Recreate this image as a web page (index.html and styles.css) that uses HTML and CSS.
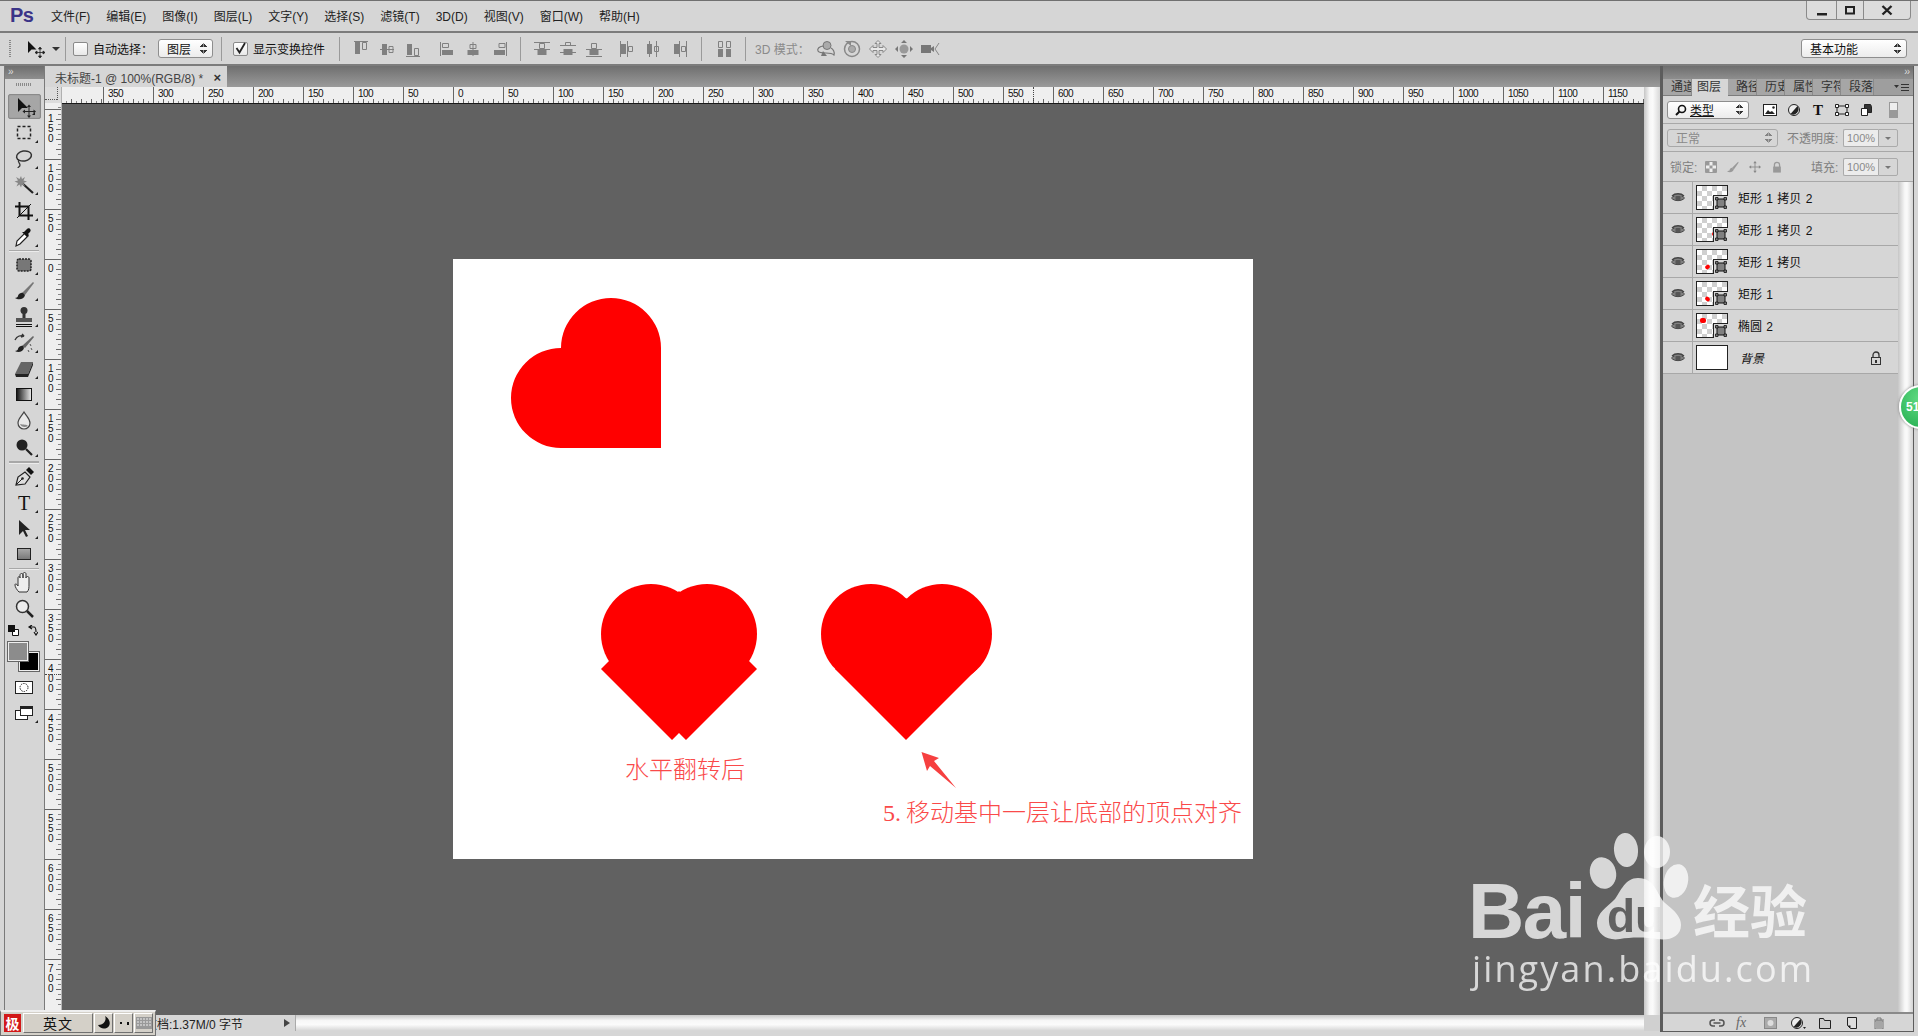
FILE: index.html
```html
<!DOCTYPE html>
<html lang="zh-CN">
<head>
<meta charset="utf-8">
<title>Photoshop</title>
<link rel="stylesheet" href="styles.css">
</head>
<body>
<svg class="defs" aria-hidden="true">
  <symbol id="a1" viewBox="0 0 26 26"><path d="M6 5h14v1H6z"/><path d="M7 6h5v12H7z"/><path class="ol" d="M14.5 6.5h4v7h-4z"/></symbol>
  <symbol id="a2" viewBox="0 0 26 26"><path d="M6 13h14v1H6z"/><path d="M8 8h5v11H8z"/><path class="ol" d="M15 10.5h4v6h-4z"/></symbol>
  <symbol id="a3" viewBox="0 0 26 26"><path d="M6 20h14v1H6z"/><path d="M7 8h5v11H7z"/><path class="ol" d="M14.5 12.5h4v7h-4z"/></symbol>
  <symbol id="a4" viewBox="0 0 26 26"><path d="M6 6h1v14H6z"/><path class="ol" d="M8.5 7.5h6v4h-6z"/><path d="M8 14h11v5H8z"/></symbol>
  <symbol id="a5" viewBox="0 0 26 26"><path d="M12.500 6h1v14h-1z"/><path class="ol" d="M10 8.500h6v4h-6z"/><path d="M7.500 14h11v5h-11z"/></symbol>
  <symbol id="a6" viewBox="0 0 26 26"><path d="M20 6h1v14h-1z"/><path class="ol" d="M13 7.500h6v4h-6z"/><path d="M8 14h11v5H8z"/></symbol>
  <symbol id="a7" viewBox="0 0 26 26"><path d="M5 6h16v1H5zM5 13h16v1H5z"/><path class="ol" d="M10.500 7.500h5v5h-5z"/><path d="M8.500 14h9v5h-9z"/></symbol>
  <symbol id="a8" viewBox="0 0 26 26"><path d="M5 9h16v1H5zM5 16h16v1H5z"/><path class="ol" d="M10.500 6.500h5v3h-5z"/><path d="M8.500 13h9v6h-9z"/></symbol>
  <symbol id="a9" viewBox="0 0 26 26"><path d="M5 13h16v1H5zM5 20h16v1H5z"/><path class="ol" d="M10.500 7.500h5v5h-5z"/><path d="M8.500 14h9v5h-9z"/></symbol>
  <symbol id="a10" viewBox="0 0 26 26"><path d="M6 5h1v16H6zM13 5h1v16h-1z"/><path d="M7 8h5v10H7z"/><path class="ol" d="M14.500 10.500h4v5h-4z"/></symbol>
  <symbol id="a11" viewBox="0 0 26 26"><path d="M9 5h1v16H9zM16 5h1v16h-1z"/><path d="M7 8h5v10H7z"/><path class="ol" d="M14.500 10.500h4v5h-4z"/></symbol>
  <symbol id="a12" viewBox="0 0 26 26"><path d="M13 5h1v16h-1zM20 5h1v16h-1z"/><path d="M8 8h5v10H8z"/><path class="ol" d="M15.500 10.500h4v5h-4z"/></symbol>
  <symbol id="a13" viewBox="0 0 26 26"><path d="M7 13h5v8H7zM15 13h5v8h-5z"/><path class="ol" d="M7.500 5.500h4v6h-4zM15.500 5.500h4v6h-4z"/></symbol>
  <symbol id="sm" viewBox="0 0 14 14"><path d="M3 3h8v8H3z" fill="none" stroke="#111"/><path d="M1.500 1.500h2.500v2.500H1.500zM10 1.500h2.500v2.500H10zM1.500 10h2.500v2.500H1.500zM10 10h2.500v2.500H10z" fill="#fff" stroke="#111" stroke-width=".8"/></symbol>
  <symbol id="eye" viewBox="0 0 14 10"><path d="M.5 5C3 1.500 11 1.500 13.500 5 11 8.500 3 8.500.5 5z" fill="#c8c8c8" stroke="#444"/><circle cx="7" cy="5" r="2.600" fill="#555"/><path d="M1 3c3-3 9-3 12 0" fill="none" stroke="#444" stroke-width="1.300"/></symbol>
</svg>

<div class="app ui">
  <header class="titlebar">
    <span class="ps-logo">Ps</span>
    <nav class="menu">
      <span>文件(F)</span><span>编辑(E)</span><span>图像(I)</span><span>图层(L)</span><span>文字(Y)</span><span>选择(S)</span><span>滤镜(T)</span><span>3D(D)</span><span>视图(V)</span><span>窗口(W)</span><span>帮助(H)</span>
    </nav>
    <div class="winbtns">
      <span class="winbtn"><svg width="12" height="12" viewBox="0 0 12 12"><path d="M1 9h10v2.500H1z" fill="#222"/></svg></span>
      <span class="winbtn"><svg width="12" height="12" viewBox="0 0 12 12"><path d="M2 3h8v6.500H2z" fill="none" stroke="#222" stroke-width="2"/></svg></span>
      <span class="winbtn wide"><svg width="12" height="12" viewBox="0 0 12 12"><path d="M1.500 2l9 8.500M10.500 2l-9 8.500" stroke="#222" stroke-width="2.400" fill="none"/></svg></span>
    </div>
  </header>

  <div class="options">
    <span class="grip"></span>
    <svg class="opt-move" width="18" height="18" viewBox="0 0 18 18"><path d="M1 1v12l3.500-3.500h5z" fill="#111"/><path d="M13 8v9M8.500 12.500h9M13 7l-1.500 2h3zM13 18l-1.500-2h3zM8 12.500l2-1.500v3zM18 12.500l-2-1.500v3z" stroke="#222" stroke-width=".8" fill="#222"/></svg>
    <span class="caret"></span>
    <span class="vsep s1"></span>
    <span class="check c1"></span>
    <span class="opt-label l1">自动选择：</span>
    <span class="select sel-layer">图层<i class="updown"></i></span>
    <span class="vsep s2"></span>
    <span class="check c2"><svg width="13" height="13" viewBox="0 0 13 13"><path d="M2.500 6l3 4.500L11 1" fill="none" stroke="#222" stroke-width="1.800"/></svg></span>
    <span class="opt-label l2">显示变换控件</span>
    <span class="vsep s3"></span>
    <svg class="oi g0"><use href="#a1"/></svg><svg class="oi"><use href="#a2"/></svg><svg class="oi"><use href="#a3"/></svg>
    <svg class="oi g2"><use href="#a4"/></svg><svg class="oi"><use href="#a5"/></svg><svg class="oi"><use href="#a6"/></svg>
    <span class="vsep s2"></span>
    <svg class="oi g2"><use href="#a7"/></svg><svg class="oi"><use href="#a8"/></svg><svg class="oi"><use href="#a9"/></svg>
    <svg class="oi g1"><use href="#a10"/></svg><svg class="oi"><use href="#a11"/></svg><svg class="oi"><use href="#a12"/></svg>
    <span class="vsep s4"></span>
    <svg class="oi g3"><use href="#a13"/></svg>
    <span class="vsep s5"></span>
    <span class="opt-label l3">3D 模式：</span>
    <svg class="oi3 first" viewBox="0 0 20 18"><ellipse cx="11" cy="5.500" rx="4" ry="4" fill="#aaa" stroke="#777"/><path d="M8 6C3 6 1 9 2 11s5 2 8 2 7 1 8 2c1-3-1-6-3-7" fill="none" stroke="#777" stroke-width="1.200"/><path d="M7 11l4 5-6 0z" fill="#777"/></svg>
    <svg class="oi3" viewBox="0 0 20 18"><circle cx="10" cy="9" r="7.500" fill="none" stroke="#888" stroke-width="1.500"/><circle cx="10" cy="9" r="3.500" fill="#aaa" stroke="#888"/><path d="M3 1h6v5z" fill="#888"/></svg>
    <svg class="oi3" viewBox="0 0 20 18"><path d="M10 .5l3 3h-2v4h4V5.500l3.500 3.500-3.500 3.500v-2h-4v4h2l-3 3-3-3h2v-4H5v2L1.500 9 5 5.500v2h4v-4H7z" fill="#e8e8e8" stroke="#888"/></svg>
    <svg class="oi3" viewBox="0 0 20 18"><circle cx="10" cy="9" r="4.500" fill="#999"/><path d="M10 0l3 3H7zM10 18l-3-3h6zM1 9l3-3v6zM19 9l-3 3V6z" fill="#777"/></svg>
    <svg class="oi3" viewBox="0 0 20 18"><path d="M1 5h10v8H1zM11 8l3-2v6l-3-2z" fill="#777"/><path d="M19 3l-4 6 4 6" fill="none" stroke="#888"/></svg>
    <span class="select sel-work">基本功能<i class="updown"></i></span>
  </div>

  <main class="main">
    <aside class="tools">
      <div class="tools-head">››</div>
      <div class="tools-grip"></div>
      <div class="tool active"><svg viewBox="0 0 22 22"><path d="M4 2v14l4-4h6z" fill="#111"/><path d="M15 10v11M10 15.500h11" stroke="#222"/><path d="M15 8.500l-2 2.500h4zM15 22l-2-2.500h4zM8.500 15.500l2.500-2v4zM22 15.500l-2.500-2v4z" fill="#222"/></svg></div>
      <div class="tool mk"><svg viewBox="0 0 22 22"><path d="M4.500 4.500h13v12h-13z" fill="none" stroke="#222" stroke-width="1.500" stroke-dasharray="3 2"/></svg></div>
      <div class="tool mk"><svg viewBox="0 0 22 22"><ellipse cx="11" cy="8" rx="7.500" ry="5" fill="none" stroke="#333" stroke-width="1.500" transform="rotate(-10 11 8)"/><path d="M6 12c-2 2 1 3 1 5s-2 2-2 3" fill="none" stroke="#333" stroke-width="1.300"/></svg></div>
      <div class="tool mk"><svg viewBox="0 0 22 22"><path d="M9 9l11 10" stroke="#222" stroke-width="2.200"/><path d="M8 2l1 3 3-2-1.500 3.500 3.500 1-3.500 1.500 1.500 3.500-3-2-1 3-1.500-3-3 2 1.500-3.500-3.500-1.500 3.500-1L3 3l3.500 2z" fill="#888"/></svg></div>
      <div class="tool mk"><svg viewBox="0 0 22 22"><path d="M6.500 2v13.500H20M2 6.500h13.500V20" fill="none" stroke="#111" stroke-width="2"/><path d="M4 18L18 4" stroke="#111" stroke-width="1"/></svg></div>
      <div class="tool mk"><svg viewBox="0 0 22 22"><path d="M3 20l1-5 8-8 3 3-8 8z" fill="#fff" stroke="#222" stroke-width="1.200"/><path d="M11 6l3-3c2-2 5 1 3 3l-2 2 1 1-2 2-5-5 2 0z" fill="#111"/></svg></div>
      <div class="tool-sep"></div>
      <div class="tool mk"><svg viewBox="0 0 22 22"><rect x="4" y="5" width="14" height="12" rx="2" fill="#777" stroke="#222" stroke-dasharray="2 1" stroke-width="1.500"/></svg></div>
      <div class="tool mk"><svg viewBox="0 0 22 22"><path d="M9 13L20 2l1 1-9 12z" fill="#777"/><path d="M10 13c-3-1-5 2-5 3s-2 2-3 2c3 2 9 2 10-3z" fill="#222"/></svg></div>
      <div class="tool mk"><svg viewBox="0 0 22 22"><circle cx="11" cy="4.500" r="3.500" fill="#333"/><path d="M9.500 7h3v5h-3z" fill="#333"/><path d="M3 12h16v4H3z" fill="#555"/><path d="M3 18.500h16M3 20.500h16" stroke="#111"/></svg></div>
      <div class="tool mk"><svg viewBox="0 0 22 22"><path d="M9 14L20 4l1 1-9 11z" fill="#666"/><path d="M10 14c-3-1-5 2-5 3s-2 2-3 2c3 2 8 1 9-3z" fill="#222"/><path d="M2 8c2-4 6-5 9-4l-2-2m2 2l-3 1" fill="none" stroke="#333" stroke-width="1.400"/><path d="M17 12l1 2M18 16l1 2M15 18l1 2" stroke="#555"/></svg></div>
      <div class="tool mk"><svg viewBox="0 0 22 22"><path d="M8 4h12L15 16H2z" fill="#666"/><path d="M2 16h13v3H3z" fill="#222"/><path d="M15 16l5-12v3l-5 12z" fill="#222"/></svg></div>
      <div class="tool mk"><svg viewBox="0 0 22 22"><defs><linearGradient id="gr"><stop offset="0" stop-color="#111"/><stop offset="1" stop-color="#eee"/></linearGradient></defs><rect x="3.500" y="4.500" width="15" height="12" fill="url(#gr)" stroke="#111"/></svg></div>
      <div class="tool mk"><svg viewBox="0 0 22 22"><path d="M11 2c3 5 6 7 6 11a6 6 0 0 1-12 0c0-4 3-6 6-11z" fill="#e8e8e8" stroke="#444" stroke-width="1.200"/><path d="M7 14c1 3 5 4 8 2-1-2-5-1-8-2z" fill="#888"/></svg></div>
      <div class="tool mk"><svg viewBox="0 0 22 22"><circle cx="9" cy="9" r="5.500" fill="#222"/><path d="M13 13l6 6" stroke="#222" stroke-width="2.200"/></svg></div>
      <div class="tool-sep tall"></div>
      <div class="tool mk"><svg viewBox="0 0 22 22"><path d="M3 19l2-8 7-5 5 5-5 7z" fill="#ddd" stroke="#222" stroke-width="1.200"/><path d="M3 19l6-6" stroke="#222"/><circle cx="9.500" cy="12.500" r="1.300" fill="#222"/><path d="M13 4l3-3 5 5-3 3z" fill="#111"/></svg></div>
      <div class="tool mk"><span class="type-t">T</span></div>
      <div class="tool mk"><svg viewBox="0 0 22 22"><path d="M6 2v15l4-4 3 6 2-1-3-6h5z" fill="#222"/></svg></div>
      <div class="tool mk"><svg viewBox="0 0 22 22"><defs><linearGradient id="gs" x1="0" y1="0" x2="0" y2="1"><stop offset="0" stop-color="#aaa"/><stop offset="1" stop-color="#777"/></linearGradient></defs><rect x="4.500" y="4.500" width="13" height="11" fill="url(#gs)" stroke="#222"/></svg></div>
      <div class="tool-sep"></div>
      <div class="tool mk"><svg viewBox="0 0 22 22"><path d="M6 20c-2-2-4-5-4-7s2-1 3 1V6c0-2 2-2 2 0V3c0-2 3-2 3 0v3-4c0-2 3-2 3 0v4c0-2 3-2 3 0v6c0 4 0 6-2 8z" fill="#eee" stroke="#333"/></svg></div>
      <div class="tool"><svg viewBox="0 0 22 22"><circle cx="9.500" cy="8.500" r="6" fill="#eee" stroke="#333" stroke-width="1.500"/><path d="M14 13l6 6" stroke="#222" stroke-width="2.500"/></svg></div>
      <div class="color-mini">
        <svg width="11" height="11" viewBox="0 0 11 11"><path d="M4.500 4.500h6v6h-6z" fill="#fff" stroke="#111"/><path d="M0 0h7v7H0z" fill="#111"/></svg>
        <svg width="11" height="11" viewBox="0 0 11 11"><path d="M2 2h5c2 0 2 2 2 5M5 0L2 2l3 2M7 7l2 3 2-3" fill="none" stroke="#111" stroke-width="1.200"/></svg>
      </div>
      <div class="swatches"><span class="sw-bg"></span><span class="sw-fg"></span></div>
      <div class="tool"><svg viewBox="0 0 22 22"><rect x="2.500" y="5.500" width="17" height="12" fill="#fff" stroke="#222"/><circle cx="11" cy="11.500" r="4" fill="none" stroke="#222" stroke-dasharray="1.500 1"/></svg></div>
      <div class="tool mk"><svg viewBox="0 0 22 22"><rect x="2.500" y="8.500" width="12" height="9" fill="#fff" stroke="#222"/><rect x="7.500" y="4.500" width="12" height="9" fill="#fff" stroke="#222"/><path d="M7.500 4.500h12V7h-12z" fill="#222"/></svg></div>
    </aside>

    <section class="work">
      <div class="tabbar">
        <div class="tab"><span>未标题-1 @ 100%(RGB/8) *</span><b>×</b></div>
      </div>
      <div class="view">
        <div class="view-main">
          <div class="ruler-row">
            <div class="corner"></div>
            <div class="hruler">
              <span class="rh lead"></span>
              <span class="rh">350</span><span class="rh">300</span><span class="rh">250</span><span class="rh">200</span><span class="rh">150</span><span class="rh">100</span><span class="rh">50</span><span class="rh">0</span><span class="rh">50</span><span class="rh">100</span><span class="rh">150</span><span class="rh">200</span><span class="rh">250</span><span class="rh">300</span><span class="rh">350</span><span class="rh">400</span><span class="rh">450</span><span class="rh">500</span><span class="rh">550</span><span class="rh">600</span><span class="rh">650</span><span class="rh">700</span><span class="rh">750</span><span class="rh">800</span><span class="rh">850</span><span class="rh">900</span><span class="rh">950</span><span class="rh">1000</span><span class="rh">1050</span><span class="rh">1100</span><span class="rh">1150</span>
              <i class="cursor-x"></i>
            </div>
          </div>
          <div class="doc-row">
            <div class="vruler">
              <span class="rv lead"></span>
              <span class="rv">150</span><span class="rv">100</span><span class="rv">50</span><span class="rv">0</span><span class="rv">50</span><span class="rv">100</span><span class="rv">150</span><span class="rv">200</span><span class="rv">250</span><span class="rv">300</span><span class="rv">350</span><span class="rv">400</span><span class="rv">450</span><span class="rv">500</span><span class="rv">550</span><span class="rv">600</span><span class="rv">650</span><span class="rv">700</span>
              <i class="cursor-y"></i>
            </div>
            <div class="doc">
              <svg class="canvas" width="800" height="600" viewBox="0 0 800 600">
                <rect width="800" height="600" fill="#fff"/>
                <g fill="#ff0000">
                  <path d="M208 189H108A50 50 0 0 1 108 89A50 50 0 0 1 208 89Z"/>
                  <circle cx="198" cy="375" r="50"/><circle cx="254" cy="375" r="50"/>
                  <path d="M148 410L219 481L226 474L233 481L304 410L226 332Z"/>
                  <circle cx="418" cy="375" r="50"/><circle cx="489" cy="375" r="50"/>
                  <path d="M453 481L382 410L453 339L524 410Z"/>
                </g>
                <path d="M468.500 493L486 499L481 502L503 529L477 507L474 512Z" fill="#f64040"/>
                <text class="note" x="172" y="519">水平翻转后</text>
                <text class="note" x="430" y="562">5.<tspan dx="5">移动基中一层让底部的顶点对齐</tspan></text>
              </svg>
            </div>
          </div>
        </div>
        <div class="vscroll"></div>
      </div>
      <div class="statusbar">
        <div class="status-info"><span>文档:1.37M/0 字节</span><i class="tri"></i></div>
        <div class="hscroll"></div>
        <div class="scroll-corner"></div>
      </div>
    </section>

    <aside class="panels">
      <div class="panel-head">››</div>
      <div class="panel-tabs">
        <span class="ptab t-a">通道</span><span class="ptab active t-b">图层</span><span class="ptab t-a">路径</span><span class="ptab t-c">历史</span><span class="ptab t-c">属性</span><span class="ptab t-c">字符</span><span class="ptab t-d">段落</span>
        <svg class="panel-menu" width="15" height="9" viewBox="0 0 15 9"><path d="M0 2h5L2.500 5zM7 1h8v1H7zM7 4h8v1H7zM7 7h8v1H7z" fill="#333"/></svg>
      </div>
      <div class="prow filter">
        <span class="select sel-filter"><svg width="12" height="12" viewBox="0 0 12 12"><circle cx="7" cy="5" r="3.500" fill="none" stroke="#111" stroke-width="1.600"/><path d="M4.500 7.500L1 11" stroke="#111" stroke-width="2"/></svg><u>类型</u><i class="updown"></i></span>
        <svg class="fi first" viewBox="0 0 14 12"><rect x=".5" y=".5" width="13" height="11" fill="#fff" stroke="#222"/><path d="M2 10l3-4 2 2 2-1 3 3z" fill="#222"/><circle cx="10.500" cy="3.500" r="1.200" fill="#222"/></svg>
        <svg class="fi" viewBox="0 0 14 12"><circle cx="7" cy="6" r="5.500" fill="#eee" stroke="#222"/><path d="M10.500 2a5.500 5.500 0 0 1-7 8z" fill="#222"/></svg>
        <span class="fi-t">T</span>
        <svg class="fi" viewBox="0 0 14 12"><path d="M2 2h10v8H2z" fill="none" stroke="#222"/><path d="M.5.500h3v3h-3zM10.500.500h3v3h-3zM.5 8.500h3v3h-3zM10.500 8.500h3v3h-3z" fill="#fff" stroke="#222"/></svg>
        <svg class="fi" viewBox="0 0 14 12"><path d="M2.500 4.500h6v7h-6z" fill="#fff" stroke="#222"/><path d="M5.500.5h6l1 2v6h-4v-4h-3z" fill="#333" stroke="#222"/></svg>
        <span class="toggle"></span>
      </div>
      <div class="prow blend">
        <span class="select sel-blend dim">正常<i class="updown"></i></span>
        <span class="dim-label op">不透明度:</span>
        <span class="pct">100%</span><span class="pct-drop"></span>
      </div>
      <div class="prow lock">
        <span class="dim-label lk">锁定:</span>
        <svg class="li first" viewBox="0 0 12 12"><path d="M.5.500h11v11H.500z" fill="#eee" stroke="#999"/><path d="M1 1h3.500v3.500H1zM7.500 1H11v3.500H7.500zM4.500 4.500h3v3h-3zM1 7.500h3.500V11H1zM7.500 7.500H11V11H7.500z" fill="#999"/></svg>
        <svg class="li" viewBox="0 0 14 14"><path d="M6 8L13 1l.5 1L8 10z" fill="#999"/><path d="M6 8c-2 0-3 2-3 3l-3 1c3 2 7 1 8-2z" fill="#999"/></svg>
        <svg class="li" viewBox="0 0 14 14"><path d="M7 1v12M1 7h12" stroke="#888"/><path d="M7 0L5 2.500h4zM7 14l-2-2.500h4zM0 7l2.500-2v4zM14 7l-2.500-2v4z" fill="#888"/></svg>
        <svg class="li" viewBox="0 0 14 14"><path d="M4 7V4.500a3 3 0 0 1 6 0V7" fill="none" stroke="#999" stroke-width="1.500"/><rect x="2.500" y="6.500" width="9" height="7" fill="#999"/></svg>
        <span class="dim-label fl">填充:</span>
        <span class="pct">100%</span><span class="pct-drop"></span>
      </div>
      <div class="layers-wrap">
        <div class="layers">
          <div class="layer"><span class="eye"><svg width="14" height="10"><use href="#eye"/></svg></span><span class="thumb"><i class="dot d1"></i><span class="badge"><svg width="14" height="14"><use href="#sm"/></svg></span></span><span class="lname">矩形 1 拷贝 2</span></div>
          <div class="layer"><span class="eye"><svg width="14" height="10"><use href="#eye"/></svg></span><span class="thumb"><i class="dot d2"></i><span class="badge"><svg width="14" height="14"><use href="#sm"/></svg></span></span><span class="lname">矩形 1 拷贝 2</span></div>
          <div class="layer"><span class="eye"><svg width="14" height="10"><use href="#eye"/></svg></span><span class="thumb"><i class="dot d3"></i><span class="badge"><svg width="14" height="14"><use href="#sm"/></svg></span></span><span class="lname">矩形 1 拷贝</span></div>
          <div class="layer"><span class="eye"><svg width="14" height="10"><use href="#eye"/></svg></span><span class="thumb"><i class="dot d4"></i><span class="badge"><svg width="14" height="14"><use href="#sm"/></svg></span></span><span class="lname">矩形 1</span></div>
          <div class="layer"><span class="eye"><svg width="14" height="10"><use href="#eye"/></svg></span><span class="thumb"><i class="dot d5"></i><span class="badge"><svg width="14" height="14"><use href="#sm"/></svg></span></span><span class="lname">椭圆 2</span></div>
          <div class="layer bg"><span class="eye"><svg width="14" height="10"><use href="#eye"/></svg></span><span class="thumb white"></span><span class="lname it">背景</span><svg class="bg-lock" width="12" height="14" viewBox="0 0 12 14"><path d="M3 7V4a3 3 0 0 1 6 0v3" fill="none" stroke="#333" stroke-width="1.300"/><rect x="1.500" y="6.500" width="9" height="7" fill="#d6d6d6" stroke="#333"/><rect x="5" y="9" width="2" height="3" fill="#333"/></svg></div>
        </div>
        <div class="pscroll"></div>
      </div>
      <div class="pfoot">
        <svg class="pf first" viewBox="0 0 16 12"><path d="M6 3H4a3 3 0 0 0 0 6h2M10 3h2a3 3 0 0 1 0 6h-2M4.500 6h7" fill="none" stroke="#555" stroke-width="1.500"/></svg>
        <span class="pf-fx">fx</span>
        <svg class="pf" viewBox="0 0 16 12"><rect x="1.500" y=".5" width="12" height="11" fill="#aaa" stroke="#888"/><circle cx="7.500" cy="6" r="3" fill="#ddd"/></svg>
        <svg class="pf" viewBox="0 0 16 12"><circle cx="7" cy="6" r="5.500" fill="#eee" stroke="#222"/><path d="M10.500 2a5.500 5.500 0 0 1-7 8z" fill="#222"/><path d="M13 10h3l-1.500 2z" fill="#222"/></svg>
        <svg class="pf" viewBox="0 0 16 12"><path d="M2.500 1.500h4l1 2h6v8h-11z" fill="#ccc" stroke="#222"/></svg>
        <svg class="pf" viewBox="0 0 16 12"><path d="M3.500.5h9v11h-6l-3-3z" fill="#ddd" stroke="#222"/><path d="M3.500 8.500h3v3z" fill="#222"/></svg>
        <svg class="pf" viewBox="0 0 16 12"><path d="M3 3h10M6 3V1h4v2" fill="none" stroke="#777"/><path d="M4 4h8v8H4z" fill="none" stroke="#777"/><path d="M6 5v6M8 5v6M10 5v6" stroke="#777"/></svg>
      </div>
    </aside>
    <div class="edge-right"></div>
  </main>
</div>

<div class="float-badge"><span>51</span></div>

<div class="ime">
  <span class="ime-cell ime-logo"><b>极</b></span>
  <span class="ime-cell ime-lang">英文</span>
  <span class="ime-cell ime-sm"><svg width="14" height="14" viewBox="0 0 14 14"><path d="M8 0c2 4-1 9-7 9 2 4 8 5 11 1 2-3 0-8-4-10z" fill="#111"/></svg></span>
  <span class="ime-cell ime-sm"><svg width="14" height="14" viewBox="0 0 14 14"><path d="M3 6h2v2H3zM10 6h2v3h-2z" fill="#111"/></svg></span>
  <span class="ime-cell ime-sm"><svg width="16" height="12" viewBox="0 0 16 12"><rect width="16" height="12" fill="#999"/><path d="M1 2h14M1 5h14M1 8h14" stroke="#eee" stroke-dasharray="2 1"/></svg></span>
</div>

<svg class="watermark" width="360" height="175" viewBox="0 0 360 175">
  <defs>
    <mask id="du-cut"><rect width="360" height="175" fill="#fff"/><text class="wm-du" x="142" y="107" fill="#000">du</text></mask>
  </defs>
  <g fill="#fff">
    <text class="wm-bai" x="3" y="113">Bai</text>
    <g mask="url(#du-cut)">
      <path d="M173 53C190 53 192 70 200 78C210 86 216 92 216 100C216 112 204 116 192 114C182 112 165 112 155 114C143 116 132 110 132 98C132 88 142 82 150 74C156 66 160 53 173 53Z"/>
    </g>
    <ellipse cx="161" cy="25" rx="12" ry="17" transform="rotate(-5 161 25)"/>
    <ellipse cx="192" cy="27" rx="13" ry="16"/>
    <ellipse cx="138" cy="48" rx="13" ry="16" transform="rotate(-15 138 48)"/>
    <ellipse cx="211" cy="56" rx="12" ry="17" transform="rotate(12 211 56)"/>
    <text class="wm-cn" x="228" y="108">经验</text>
    <text class="wm-url" x="7" y="157" textLength="340">jingyan.baidu.com</text>
  </g>
</svg>
</body>
</html>
```

FILE: styles.css
```css
* { box-sizing: border-box; }
html, body { margin: 0; width: 1918px; height: 1036px; overflow: hidden; background: #d6d6d6; }
body { position: relative; }
.defs { position: absolute; width: 0; height: 0; }
.defs path { fill: #808080; }
.defs .ol { fill: none; stroke: #808080; }
.ui { font-family: "Liberation Sans", "Noto Sans CJK SC", sans-serif; font-size: 12px; color: #111; }
.app { display: flex; flex-direction: column; width: 1918px; height: 1036px; }

/* title */
.titlebar { height: 33px; flex: none; display: flex; align-items: flex-start; background: #d6d6d6; border-top: 1px solid #707070; border-bottom: 2px solid #7c7c7c; position: relative; }
.ps-logo { font: bold 20px/22px "Liberation Sans", sans-serif; letter-spacing: -.5px; color: #3b3488; margin: 3px 0 0 10px; width: 41px; }
.menu { display: flex; margin-top: 7px; }
.menu span { margin-right: 16px; line-height: 18px; white-space: nowrap; color: #222; }
.winbtns { margin-left: auto; margin-right: 7px; display: flex; height: 19px; border: 1px solid #8a8a8a; border-top: 0; border-radius: 0 0 4px 4px; background: #dcdcdc; }
.winbtn { width: 27px; display: flex; align-items: center; justify-content: center; border-left: 1px solid #8a8a8a; }
.winbtn:first-child { border-left: 0; width: 29px; }
.winbtn.wide { width: 47px; }

/* options */
.options { height: 33px; flex: none; display: flex; align-items: center; padding-left: 9px; background: #d6d6d6; border-bottom: 2px solid #7c7c7c; }
.grip { width: 2px; height: 18px; background: repeating-linear-gradient(#888 0 1px, transparent 1px 2px); }
.opt-move { margin-left: 16px; flex: none; }
.caret { margin-left: 7px; border: 4px solid transparent; border-top: 4px solid #333; border-bottom: 0; }
.vsep { width: 1px; height: 24px; background: #9a9a9a; flex: none; }
.s1 { margin-left: 5px; } .s2 { margin-left: 8px; } .s3 { margin-left: 14px; } .s4 { margin-left: 9px; } .s5 { margin-left: 8px; }
.check { width: 15px; height: 14px; flex: none; background: linear-gradient(#fff, #e8e8e8); border: 1px solid #8a8a8a; border-radius: 2px; display: flex; align-items: center; justify-content: center; }
.c1 { margin-left: 7px; } .c2 { margin-left: 11px; }
.opt-label { flex: none; white-space: nowrap; }
.l1 { margin-left: 5px; width: 60px; }
.l2 { margin-left: 5px; width: 72px; }
.l3 { margin-left: 9px; width: 61px; color: #8a8a8a; }
.select { position: relative; display: inline-flex; align-items: center; height: 19px; background: linear-gradient(#fff, #ececec); border: 1px solid #8e8e8e; border-radius: 3px; flex: none; }
.updown { position: absolute; right: 5px; top: 50%; width: 7px; height: 11px; margin-top: -5.5px; background:
  linear-gradient(135deg, transparent 50%, #333 50%) 0 0 / 3.5px 4px no-repeat,
  linear-gradient(225deg, transparent 50%, #333 50%) 100% 0 / 3.5px 4px no-repeat,
  linear-gradient(45deg, transparent 50%, #333 50%) 0 100% / 3.5px 4px no-repeat,
  linear-gradient(315deg, transparent 50%, #333 50%) 100% 100% / 3.5px 4px no-repeat; }
.sel-layer { width: 55px; margin-left: 5px; padding-left: 8px; }
.sel-work { width: 106px; padding-left: 8px; margin-left: auto; margin-right: 11px; }
.oi { width: 26px; height: 26px; flex: none; }
.g0 { margin-left: 8px; } .g1 { margin-left: 7px; } .g2 { margin-left: 8px; } .g3 { margin-left: 9px; }
.oi3 { width: 20px; height: 18px; margin: 0 3px; flex: none; }
.oi3.first { margin-left: 0; }

/* main */
.main { flex: 1; display: flex; min-height: 0; }
.tools { width: 41px; margin-left: 4px; flex: none; background: #d6d6d6; border-left: 1px solid #7a7a7a; border-right: 1px solid #7a7a7a; padding-right: 1px; display: flex; flex-direction: column; align-items: stretch; height: 966px; }
.tools-head { height: 13px; margin-right: -1px; background: linear-gradient(#6e6e6e, #8e8e8e); color: #ddd; font-size: 10px; line-height: 12px; padding-left: 3px; letter-spacing: -1px; }
.tools-grip { height: 15px; background: repeating-linear-gradient(90deg, #8a8a8a 0 1px, transparent 1px 2px) center 4px / 16px 3px no-repeat; }
.tool { height: 26px; flex: none; display: flex; align-items: center; justify-content: center; position: relative; }
.tool svg { width: 22px; height: 22px; }
.tool.active { margin: 0 2px 1px 3px; background: #a6a6a6; border: 1px solid #8a8a8a; border-radius: 2px; height: 25px; box-shadow: inset 0 0 1px #777; }
.tool.active::after, .tool.mk::after { content: ""; position: absolute; right: 5px; bottom: 3px; border-left: 3px solid transparent; border-bottom: 3px solid #222; }
.tool-sep { height: 2px; margin: 0 4px; background: #a8a8a8; border-bottom: 1px solid #ececec; flex: none; }
.tool-sep.tall { height: 4px; margin-bottom: 0; border-top: 1px solid #d6d6d6; }
.type-t { font: 20px/22px "Liberation Serif", serif; color: #111; }
.color-mini { height: 16px; display: flex; justify-content: space-between; padding: 3px 5px 0 3px; flex: none; }
.swatches { height: 34px; position: relative; flex: none; margin-top: 2px; }
.sw-fg, .sw-bg { position: absolute; display: block; width: 20px; height: 19px; border: 1px solid #eee; box-shadow: 0 0 0 1px #666; }
.sw-fg { left: 3px; top: 2px; background: #8c8c8c; }
.sw-bg { left: 14px; top: 12px; background: #000; }

.work { width: 1615px; flex: none; display: flex; flex-direction: column; height: 965px; }
.tabbar { height: 21px; flex: none; background: linear-gradient(#6f6f6f, #9a9a9a); }
.tab { width: 182px; height: 21px; padding: 1px 6px 0 10px; display: flex; align-items: center; justify-content: space-between; background: #d6d6d6; color: #444; font-size: 12px; white-space: nowrap; }
.tab b { font: bold 13px/1 "Liberation Sans", sans-serif; color: #333; }
.view { height: 928px; display: flex; flex: none; }
.view-main { flex: 1; display: flex; flex-direction: column; min-width: 0; }
.ruler-row { height: 16px; display: flex; flex: none; }
.corner { width: 17px; background: #dcdcdc; border-right: 1px solid #b0b0b0; position: relative; flex: none; }
.corner::before { content: ""; position: absolute; left: 0; bottom: 3px; width: 12px; border-top: 1px dotted #555; }
.corner::after { content: ""; position: absolute; left: 12px; top: 0; height: 13px; border-left: 1px dotted #555; }
.hruler { flex: 1; display: flex; overflow: hidden; position: relative; background: #efefef; min-width: 0; }
.rh { flex: none; width: 50px; height: 16px; border-left: 1px solid #666; padding-left: 4px; font: 10px/13px "Liberation Sans", sans-serif; letter-spacing: -.6px; color: #111; background:
  repeating-linear-gradient(90deg, transparent 0 9px, #666 9px 10px) 0 100% / 100% 4px no-repeat,
  repeating-linear-gradient(90deg, transparent 0 4px, #888 4px 5px) 0 100% / 100% 2px no-repeat; }
.rh.lead { width: 41px; border-left: 0; }
.cursor-x { position: absolute; left: 971px; top: 0; height: 16px; border-left: 1px dotted #444; }
.doc-row { flex: 1; display: flex; min-height: 0; }
.vruler { width: 17px; flex: none; background: #efefef; border-right: 1px solid #b8b8b8; display: flex; flex-direction: column; overflow: hidden; position: relative; }
.rv { display: block; flex: none; height: 50px; width: 16px; border-top: 1px solid #666; padding: 4px 8px 0 3px; font: 10px/10px "Liberation Sans", sans-serif; word-break: break-all; color: #111; background:
  repeating-linear-gradient(transparent 0 9px, #666 9px 10px) 100% 0 / 5px 100% no-repeat,
  repeating-linear-gradient(transparent 0 4px, #888 4px 5px) 100% 0 / 3px 100% no-repeat; }
.rv.lead { height: 6px; border-top: 0; padding: 0; }
.cursor-y { position: absolute; left: 0; top: 571px; width: 16px; border-top: 1px dotted #444; }
.doc { flex: 1; background: #616161; border-top: 1px solid #1a1a1a; padding: 155px 0 0 391px; min-width: 0; overflow: hidden; }
.canvas { display: block; }
.note { font: 24px "Liberation Serif", "Noto Sans CJK SC", serif; fill: #fa4a4a; font-weight: 300; }
.vscroll { width: 16px; flex: none; background: linear-gradient(90deg, #c6c6c6, #f7f7f7 35%, #fbfbfb 55%, #d8d8d8); }

.statusbar { height: 16px; display: flex; flex: none; }
.status-info { width: 251px; flex: none; padding-left: 100px; padding-right: 5px; background: #d6d6d6; border-right: 1px solid #aaa; display: flex; align-items: center; justify-content: space-between; font-size: 12px; color: #222; white-space: nowrap; }
.tri { border-left: 6px solid #444; border-top: 4.500px solid transparent; border-bottom: 4.500px solid transparent; }
.hscroll { flex: 1; background: linear-gradient(#c8c8c8, #f7f7f7 35%, #fbfbfb 60%, #d4d4d4); }
.scroll-corner { width: 16px; background: #d0d0d0; flex: none; }

/* right panels */
.panels { width: 254px; flex: none; border-left: 3px solid #5c5c5c; border-right: 1px solid #5c5c5c; border-bottom: 1px solid #5c5c5c; display: flex; flex-direction: column; height: 966px; background: #d6d6d6; }
.panel-head { height: 13px; flex: none; background: linear-gradient(#6e6e6e, #8e8e8e); color: #ddd; font-size: 10px; line-height: 12px; text-align: right; padding-right: 4px; letter-spacing: -1px; }
.panel-tabs { height: 17px; flex: none; display: flex; background: #9e9e9e; position: relative; border-bottom: 1px solid #7c7c7c; }
.ptab { display: block; overflow: hidden; white-space: nowrap; height: 16px; line-height: 16px; padding-left: 8px; color: #333; border-right: 1px solid #8a8a8a; background: #a6a6a6; font-size: 12px; }
.t-a { width: 29px; } .t-c { width: 28px; } .t-d { width: 33px; } .t-b { width: 36px; }
.ptab.active { background: #d6d6d6; height: 17px; position: relative; z-index: 1; border-right: 0; padding-left: 5px; }
.panel-menu { position: absolute; right: 4px; top: 4px; }
.prow { flex: none; display: flex; align-items: center; padding-left: 4px; border-bottom: 1px solid #a8a8a8; }
.filter { height: 28px; }
.blend { height: 28px; }
.lock { height: 30px; }
.sel-filter { width: 82px; height: 18px; padding-left: 7px; gap: 3px; }
.sel-filter u { color: #111; }
.fi { width: 14px; height: 12px; margin-left: 10px; flex: none; }
.fi.first { margin-left: 14px; }
.fi-t { width: 14px; margin-left: 10px; font: bold 15px/12px "Liberation Serif", serif; text-align: center; color: #111; }
.toggle { width: 9px; height: 16px; margin-left: 16px; background: linear-gradient(#eee 50%, #999 50%); border: 1px solid #999; }
.sel-blend { width: 111px; height: 18px; padding-left: 8px; background: #d6d6d6; border-color: #a8a8a8; color: #8a8a8a; }
.dim .updown { opacity: .5; }
.dim-label { color: #808080; white-space: nowrap; flex: none; }
.op { margin-left: 9px; width: 56px; }
.lk { margin-left: 3px; width: 34px; }
.fl { margin-left: 28px; width: 32px; }
.pct { width: 35px; height: 18px; line-height: 17px; background: #ececec; border: 1px solid #aaa; border-right: 0; border-radius: 2px 0 0 2px; color: #8a8a8a; font-size: 11px; padding-left: 3px; flex: none; }
.pct-drop { width: 20px; height: 18px; border: 1px solid #aaa; border-radius: 0 2px 2px 0; flex: none; position: relative; background: #d6d6d6; }
.pct-drop::after { content: ""; position: absolute; left: 6px; top: 7px; border: 3px solid transparent; border-top: 3px solid #777; border-bottom: 0; }
.li { width: 12px; height: 12px; margin-left: 10px; flex: none; }
.li.first { margin-left: 1px; }
.layers-wrap { flex: 1; display: flex; min-height: 0; background: #c4c4c4; }
.layers { flex: 1; display: flex; flex-direction: column; }
.layer { height: 32px; flex: none; display: flex; align-items: center; background: #d6d6d6; border-bottom: 1px solid #a8a8a8; position: relative; }
.eye { width: 30px; height: 31px; flex: none; display: flex; align-items: center; justify-content: center; border-right: 1px solid #a8a8a8; }
.thumb { width: 32px; height: 25px; margin-left: 3px; flex: none; position: relative; border: 1px solid #222; background: repeating-conic-gradient(#cfcfcf 0 25%, #fff 0 50%) 0 0 / 10px 10px; }
.thumb.white { background: #fff; }
.dot { position: absolute; width: 5px; height: 4px; background: #f00; border-radius: 2px; display: block; }
.d1 { left: 16px; top: 15px; } .d2 { left: 15px; top: 14px; } .d3 { left: 8px; top: 15px; transform: rotate(-40deg); } .d4 { left: 8px; top: 15px; transform: rotate(35deg); } .d5 { left: 3px; top: 4px; width: 6px; height: 5px; }
.badge { position: absolute; right: -1px; bottom: -1px; width: 15px; height: 15px; background: #d6d6d6; border-left: 1px solid #222; border-top: 1px solid #222; display: block; }
.badge svg { display: block; }
.lname { margin-left: 10px; word-spacing: 1px; white-space: nowrap; color: #111; }
.lname.it { font-style: italic; margin-left: 12px; }
.bg-lock { position: absolute; right: 16px; top: 9px; }
.pscroll { width: 15px; flex: none; background: linear-gradient(90deg, #c6c6c6, #f7f7f7 45%, #fafafa 60%, #d4d4d4); }
.pfoot { height: 19px; flex: none; display: flex; align-items: center; border-top: 2px solid #8a8a8a; background: #d6d6d6; }
.pf { width: 16px; height: 12px; margin-left: 11px; flex: none; }
.pf.first { margin-left: 46px; }
.pf-fx { font: italic 14px/12px "Liberation Serif", serif; color: #666; margin-left: 11px; width: 16px; flex: none; }
.edge-right { flex: 1; background: #d6d6d6; }

/* overlays */
.float-badge { position: absolute; left: 1899px; top: 385px; width: 44px; height: 44px; border-radius: 50%; background: radial-gradient(circle at 50% 30%, #63dc84, #2fb65a 80%); border: 2px solid #fff; box-shadow: 0 0 3px #777; color: #fff; font: bold 12px/40px "Liberation Sans", sans-serif; padding-left: 5px; }
.ime { position: absolute; left: 0; top: 1010px; width: 156px; height: 26px; background: #d4d0c8; border: 1px solid #707070; border-top: 2px solid #eee; display: flex; padding: 1px 2px; gap: 1px; font-family: "Noto Sans CJK SC", sans-serif; }
.ime-cell { border: 1px solid; border-color: #fff #707070 #707070 #fff; display: flex; align-items: center; justify-content: center; flex: none; height: 20px; }
.ime-logo { width: 19px; background: #d21818; color: #fff; border-color: #d4d0c8; font-size: 14px; line-height: 1; }
.ime-lang { width: 70px; font-size: 14px; letter-spacing: 1px; color: #111; }
.ime-sm { width: 19px; }
.watermark { position: absolute; left: 1465px; top: 825px; opacity: .75; }
.wm-bai { font: bold 78px "Liberation Sans", sans-serif; letter-spacing: -1.500px; }
.wm-du { font: bold 46px "Liberation Sans", sans-serif; }
.wm-cn { font: bold 57px "Noto Sans CJK SC", sans-serif; }
.wm-url { font: 36px "Open Sans", sans-serif; }
```
